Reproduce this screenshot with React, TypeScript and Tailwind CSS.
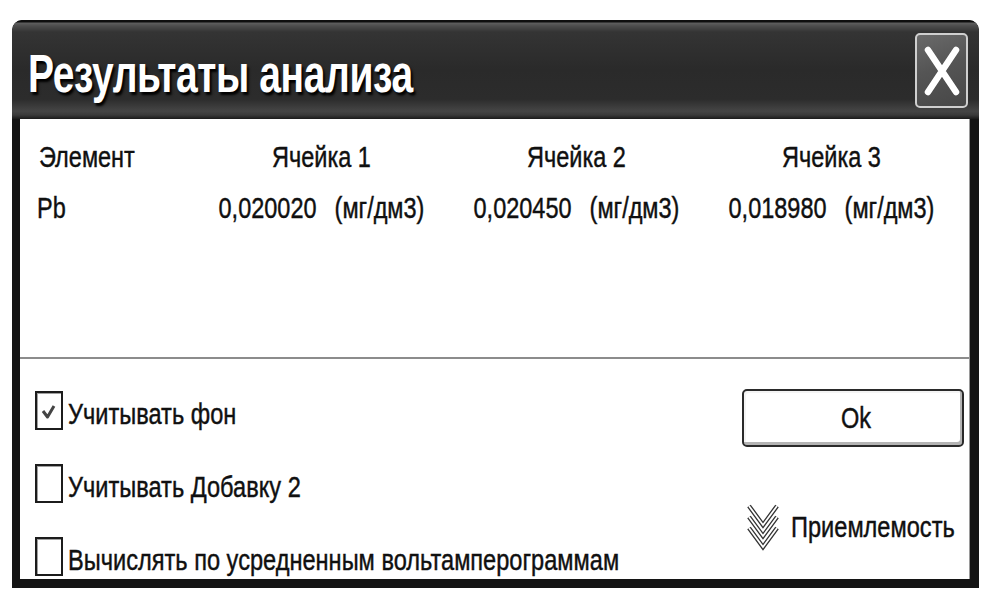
import React from "react";

const SANS = "font-['Liberation_Sans',Arial,sans-serif]";

const cells = [
  { head: "Ячейка 1", value: "0,020020" },
  { head: "Ячейка 2", value: "0,020450" },
  { head: "Ячейка 3", value: "0,018980" },
];

const options = [
  { label: "Учитывать фон", checked: true },
  { label: "Учитывать Добавку 2", checked: false },
  { label: "Вычислять по усредненным вольтамперограммам", checked: false },
];

// the dialog uses a tall, narrow face: glyphs are stretched vertically
const TALL = "inline-block origin-center scale-y-[1.22] [-webkit-text-stroke:0.35px_#101010]";
const TALL_LABEL = "inline-block origin-center scale-y-[1.26] [-webkit-text-stroke:0.35px_#101010]";

function CloseButton() {
  return (
    <button className="mt-[13px] mr-[11px] w-[53px] h-[75px] shrink-0 rounded-[5px] border-2 border-[#cfcfcf] bg-[linear-gradient(160deg,#6a6a6a_0%,#555_45%,#474747_100%)] flex items-center justify-center">
      <svg width="38" height="50" viewBox="0 0 38 50">
        <path d="M5 4 L33 46 M33 4 L5 46" stroke="#fff" strokeWidth="6.5" strokeLinecap="round" />
      </svg>
    </button>
  );
}

function CheckBox({ checked }: { checked: boolean }) {
  return (
    <span className="w-[28px] h-[39px] shrink-0 border-2 border-[#1c1c1c] bg-white shadow-[inset_1px_1px_0_#a0a0a0] flex items-center">
      {checked && (
        <svg width="18" height="22" viewBox="0 0 18 22" className="ml-[3px]">
          <path d="M3 11 L7.5 17 L14 6" fill="none" stroke="#444" strokeWidth="3" strokeLinejoin="round" />
        </svg>
      )}
    </span>
  );
}

// three stacked outlined chevrons ("show more")
function Chevrons() {
  const tops = [3, 14, 25];
  return (
    <svg width="34" height="48" viewBox="0 0 34 48" className="shrink-0">
      {tops.map((t) => (
        <g key={t}>
          <path d={`M3 ${t} L17 ${t + 19} L31 ${t}`} fill="none" stroke="#333" strokeWidth="4.4" strokeLinejoin="miter" />
          <path d={`M3 ${t} L17 ${t + 19} L31 ${t}`} fill="none" stroke="#fff" strokeWidth="1.8" strokeLinejoin="miter" />
        </g>
      ))}
    </svg>
  );
}

export default function App() {
  return (
    <div className={`w-[990px] h-[590px] bg-white overflow-hidden ${SANS}`}>
      <div className="ml-[12px] mt-[20px] w-[967px] h-[568px] bg-[#141414] rounded-t-[10px] flex flex-col overflow-hidden">
        {/* caption */}
        <div className="h-[99px] shrink-0 rounded-t-[10px] bg-[linear-gradient(180deg,#0e0e0e_0px,#0e0e0e_2px,#5e5e5e_3px,#4c4c4c_6px,#343434_12px,#2a2a2a_50%,#2c2c2c_80%,#454545_92%,#3a3a3a_96%,#1a1a1a_100%)] flex items-start justify-between">
          <h1 className="pl-[16px] pt-[29px] text-[39px] leading-[49px] font-bold tracking-[-0.4px] text-white whitespace-nowrap">
            <span className="inline-block origin-center scale-y-[1.36] [text-shadow:2px_2px_2px_#000]">Результаты анализа</span>
          </h1>
          <CloseButton />
        </div>

        {/* client area */}
        <div className="flex-1 ml-[8px] mr-[9px] mb-[9px] bg-white border-r border-[#9a9a9a] flex flex-col text-[#101010]">
          <div className="h-[238px] shrink-0 pt-[22px] grid grid-cols-[174px_255px_255px_255px] grid-rows-[32px_32px] gap-y-[19px] content-start text-[23.5px] leading-[32px]">
            <div className="pl-[19px]">
              <span className={TALL}>Элемент</span>
            </div>
            {cells.map((c) => (
              <div key={c.head} className="text-center">
                <span className={TALL}>{c.head}</span>
              </div>
            ))}
            <div className="pl-[17px]">
              <span className={TALL}>Pb</span>
            </div>
            {cells.map((c) => (
              <div key={c.value} className="flex justify-center gap-[18px]">
                <span className={TALL}>{c.value}</span>
                <span className={TALL}>(мг/дм3)</span>
              </div>
            ))}
          </div>

          <div className="h-[2px] shrink-0 bg-[#8c8c8c]" />

          <div className="flex-1 flex">
            <div className="flex-1 min-w-0 pl-[15px] pt-[32px] flex flex-col gap-[34px]">
              {options.map((o) => (
                <label key={o.label} className="flex items-start h-[39px]">
                  <CheckBox checked={o.checked} />
                  <span className="ml-[5px] text-[23.6px] leading-[47px] whitespace-nowrap">
                    <span className={TALL_LABEL}>{o.label}</span>
                  </span>
                </label>
              ))}
            </div>

            <div className="w-[222px] shrink-0 mr-[5px] pt-[30px] flex flex-col">
              <button className="h-[58px] rounded-[5px] border-2 border-[#2a2a2a] bg-white shadow-[inset_-2px_-3px_0_#b4b4b4,inset_2px_2px_0_#f4f4f4] text-[23.5px] leading-[29px] flex items-center justify-center pl-[6px]">
                <span className={TALL_LABEL}>Ok</span>
              </button>
              <div className="mt-[56px] ml-[4px] flex items-center gap-[11px]">
                <Chevrons />
                <span className="text-[23.6px] leading-[34px] whitespace-nowrap">
                  <span className={TALL_LABEL}>Приемлемость</span>
                </span>
              </div>
            </div>
          </div>
        </div>
      </div>
    </div>
  );
}
